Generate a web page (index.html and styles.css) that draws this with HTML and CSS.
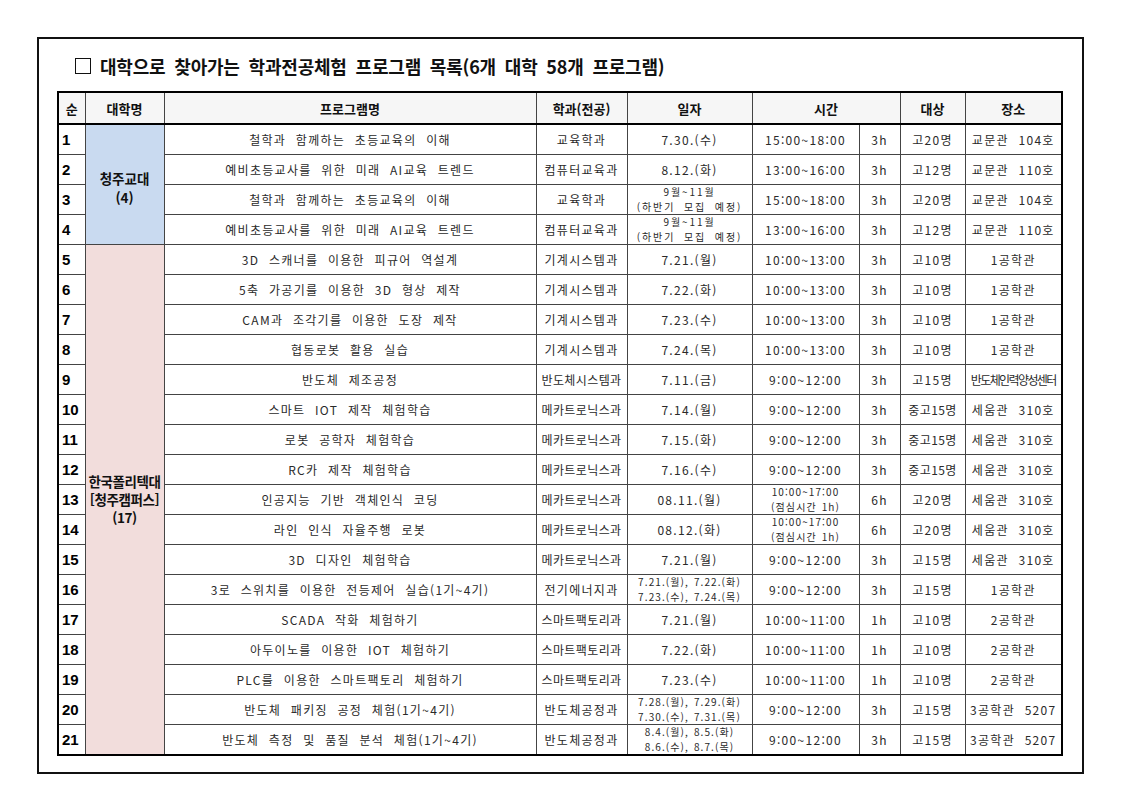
FILE: index.html
```html
<!DOCTYPE html>
<html lang="ko">
<head>
<meta charset="utf-8">
<title>학과전공체험 프로그램 목록</title>
<link rel="stylesheet" href="styles.css">
</head>
<body>
<div class="frame">
  <h1 class="title"><span class="checkbox"></span>대학으로 찾아가는 학과전공체험 프로그램 목록(6개 대학 58개 프로그램)</h1>
  <table class="list">
    <colgroup>
      <col class="c-no"><col class="c-univ"><col class="c-prog"><col class="c-dept"><col class="c-date"><col class="c-time"><col class="c-hour"><col class="c-target"><col class="c-place">
    </colgroup>
    <thead>
      <tr class="head">
        <th>순</th><th>대학명</th><th>프로그램명</th><th>학과(전공)</th><th>일자</th><th colspan="2">시간</th><th>대상</th><th>장소</th>
      </tr>
    </thead>
    <tbody>
      <tr><td class="no">1</td><td class="univ blue" rowspan="4"><span class="univ-text">청주교대<br>(4)</span></td><td>철학과 함께하는 초등교육의 이해</td><td>교육학과</td><td>7.30.(수)</td><td>15:00~18:00</td><td>3h</td><td>고20명</td><td>교문관 104호</td></tr>
      <tr><td class="no">2</td><td>예비초등교사를 위한 미래 AI교육 트렌드</td><td>컴퓨터교육과</td><td>8.12.(화)</td><td>13:00~16:00</td><td>3h</td><td>고12명</td><td>교문관 110호</td></tr>
      <tr><td class="no">3</td><td>철학과 함께하는 초등교육의 이해</td><td>교육학과</td><td class="two wide"><span class="ln">9월~11월</span><span class="ln">(하반기 모집 예정)</span></td><td>15:00~18:00</td><td>3h</td><td>고20명</td><td>교문관 104호</td></tr>
      <tr><td class="no">4</td><td>예비초등교사를 위한 미래 AI교육 트렌드</td><td>컴퓨터교육과</td><td class="two wide"><span class="ln">9월~11월</span><span class="ln">(하반기 모집 예정)</span></td><td>13:00~16:00</td><td>3h</td><td>고12명</td><td>교문관 110호</td></tr>
      <tr><td class="no">5</td><td class="univ pink" rowspan="17"><span class="univ-text tight">한국폴리텍대<br>[청주캠퍼스]<br>(17)</span></td><td>3D 스캐너를 이용한 피규어 역설계</td><td>기계시스템과</td><td>7.21.(월)</td><td>10:00~13:00</td><td>3h</td><td>고10명</td><td>1공학관</td></tr>
      <tr><td class="no">6</td><td>5축 가공기를 이용한 3D 형상 제작</td><td>기계시스템과</td><td>7.22.(화)</td><td>10:00~13:00</td><td>3h</td><td>고10명</td><td>1공학관</td></tr>
      <tr><td class="no">7</td><td>CAM과 조각기를 이용한 도장 제작</td><td>기계시스템과</td><td>7.23.(수)</td><td>10:00~13:00</td><td>3h</td><td>고10명</td><td>1공학관</td></tr>
      <tr><td class="no">8</td><td>협동로봇 활용 실습</td><td>기계시스템과</td><td>7.24.(목)</td><td>10:00~13:00</td><td>3h</td><td>고10명</td><td>1공학관</td></tr>
      <tr><td class="no">9</td><td>반도체 제조공정</td><td class="narrow">반도체시스템과</td><td>7.11.(금)</td><td>9:00~12:00</td><td>3h</td><td>고15명</td><td class="squeeze">반도체인력양성센터</td></tr>
      <tr><td class="no">10</td><td>스마트 IOT 제작 체험학습</td><td class="narrow">메카트로닉스과</td><td>7.14.(월)</td><td>9:00~12:00</td><td>3h</td><td class="narrow">중고15명</td><td>세움관 310호</td></tr>
      <tr><td class="no">11</td><td>로봇 공학자 체험학습</td><td class="narrow">메카트로닉스과</td><td>7.15.(화)</td><td>9:00~12:00</td><td>3h</td><td class="narrow">중고15명</td><td>세움관 310호</td></tr>
      <tr><td class="no">12</td><td>RC카 제작 체험학습</td><td class="narrow">메카트로닉스과</td><td>7.16.(수)</td><td>9:00~12:00</td><td>3h</td><td class="narrow">중고15명</td><td>세움관 310호</td></tr>
      <tr><td class="no">13</td><td>인공지능 기반 객체인식 코딩</td><td class="narrow">메카트로닉스과</td><td>08.11.(월)</td><td class="two"><span class="ln">10:00~17:00</span><span class="ln">(점심시간 1h)</span></td><td>6h</td><td>고20명</td><td>세움관 310호</td></tr>
      <tr><td class="no">14</td><td>라인 인식 자율주행 로봇</td><td class="narrow">메카트로닉스과</td><td>08.12.(화)</td><td class="two"><span class="ln">10:00~17:00</span><span class="ln">(점심시간 1h)</span></td><td>6h</td><td>고20명</td><td>세움관 310호</td></tr>
      <tr><td class="no">15</td><td>3D 디자인 체험학습</td><td class="narrow">메카트로닉스과</td><td>7.21.(월)</td><td>9:00~12:00</td><td>3h</td><td>고15명</td><td>세움관 310호</td></tr>
      <tr><td class="no">16</td><td>3로 스위치를 이용한 전등제어 실습(1기~4기)</td><td>전기에너지과</td><td class="two"><span class="ln">7.21.(월), 7.22.(화)</span><span class="ln">7.23.(수), 7.24.(목)</span></td><td>9:00~12:00</td><td>3h</td><td>고15명</td><td>1공학관</td></tr>
      <tr><td class="no">17</td><td>SCADA 작화 체험하기</td><td class="narrow">스마트팩토리과</td><td>7.21.(월)</td><td>10:00~11:00</td><td>1h</td><td>고10명</td><td>2공학관</td></tr>
      <tr><td class="no">18</td><td>아두이노를 이용한 IOT 체험하기</td><td class="narrow">스마트팩토리과</td><td>7.22.(화)</td><td>10:00~11:00</td><td>1h</td><td>고10명</td><td>2공학관</td></tr>
      <tr><td class="no">19</td><td>PLC를 이용한 스마트팩토리 체험하기</td><td class="narrow">스마트팩토리과</td><td>7.23.(수)</td><td>10:00~11:00</td><td>1h</td><td>고10명</td><td>2공학관</td></tr>
      <tr><td class="no">20</td><td>반도체 패키징 공정 체험(1기~4기)</td><td>반도체공정과</td><td class="two"><span class="ln">7.28.(월), 7.29.(화)</span><span class="ln">7.30.(수), 7.31.(목)</span></td><td>9:00~12:00</td><td>3h</td><td>고15명</td><td>3공학관 5207</td></tr>
      <tr><td class="no">21</td><td>반도체 측정 및 품질 분석 체험(1기~4기)</td><td>반도체공정과</td><td class="two"><span class="ln">8.4.(월), 8.5.(화)</span><span class="ln">8.6.(수), 8.7.(목)</span></td><td>9:00~12:00</td><td>3h</td><td>고15명</td><td>3공학관 5207</td></tr>
    </tbody>
  </table>
</div>
</body>
</html>
```

FILE: styles.css
```css
html, body {
  margin: 0;
  padding: 0;
  background: #ffffff;
}

body {
  padding: 37px 0 0 37px;
  font-family: "Noto Sans CJK KR", "Noto Sans", sans-serif;
  color: #222;
}

.frame {
  box-sizing: border-box;
  width: 1047px;
  height: 737px;
  border: 2px solid #111;
  padding: 16px 0 0 18px;
}

.title {
  margin: 0 0 14px 18px;
  display: flex;
  align-items: center;
  height: 22px;
  font-size: 18px;
  line-height: 22px;
  font-weight: 700;
  color: #111;
  letter-spacing: -0.2px;
  word-spacing: 4px;
}

.checkbox {
  box-sizing: border-box;
  display: inline-block;
  flex: none;
  width: 16px;
  height: 16px;
  border: 1.5px solid #111;
  margin-right: 9px;
}

.list {
  border-collapse: collapse;
  table-layout: fixed;
  width: 1004px;
  border: 2px solid #000;
}

.c-no { width: 27px; }
.c-univ { width: 79px; }
.c-prog { width: 372px; }
.c-dept { width: 91px; }
.c-date { width: 125px; }
.c-time { width: 107px; }
.c-hour { width: 41px; }
.c-target { width: 65px; }
.c-place { width: 97px; }

.list th,
.list td {
  border: 1px solid #444;
  padding: 0;
  text-align: center;
  vertical-align: middle;
  white-space: nowrap;
  overflow: hidden;
}

.list th {
  height: 30px;
  font-size: 13px;
  font-weight: 700;
  color: #111;
  background: #f6f6f6;
  border-bottom: 2px solid #000;
}

.list td {
  height: 29px;
  font-size: 12px;
  line-height: 14px;
  letter-spacing: 1.3px;
  word-spacing: 5px;
  color: #2a2a2a;
}

.list td.no {
  font-family: "Liberation Sans", Arial, sans-serif;
  font-weight: 700;
  font-size: 15px;
  letter-spacing: 0;
  text-align: left;
  padding-left: 3px;
  color: #000;
}

.list td.two {
  font-size: 10px;
  line-height: 14.5px;
  letter-spacing: 1.1px;
  word-spacing: 1px;
}

.list td.two .ln {
  display: block;
  height: 14.5px;
  line-height: 14.5px;
}

.list td.two.wide {
  letter-spacing: 1.9px;
  word-spacing: 4px;
}

.list td.narrow {
  letter-spacing: 0.4px;
}

.list td.squeeze {
  letter-spacing: -1.6px;
}

.list td.univ {
  font-size: 13.5px;
  font-weight: 700;
  line-height: 19px;
  color: #111;
  letter-spacing: 0;
  word-spacing: 0;
}

.univ-text {
  display: inline-block;
  padding-top: 6px;
}

.univ-text.tight {
  padding-top: 0;
  letter-spacing: -0.4px;
  line-height: 18px;
}

.blue { background: #c9daf0; }
.pink { background: #f2dddc; }
```
